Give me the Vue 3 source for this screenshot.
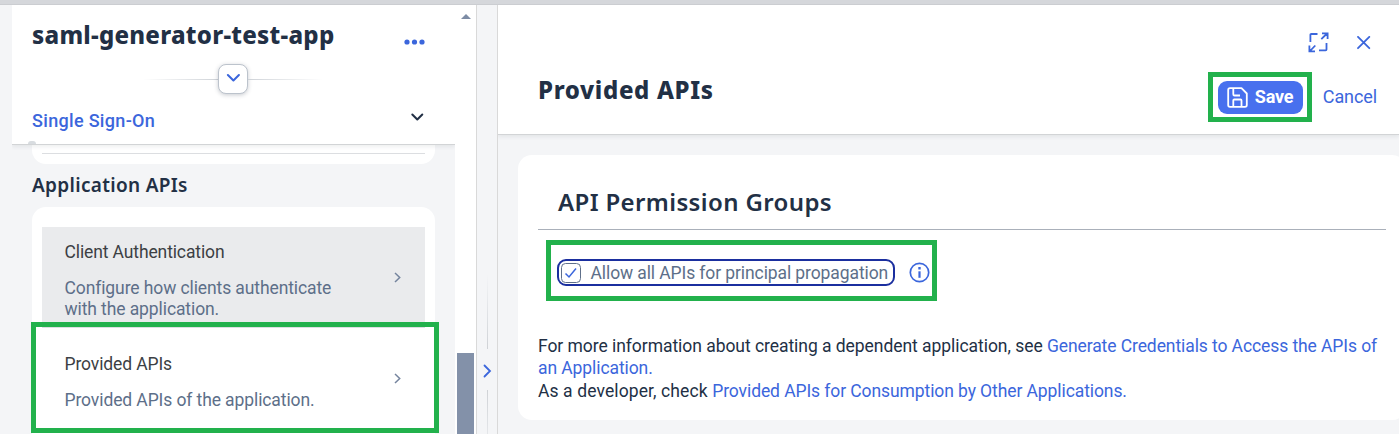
<script setup>
const items = [
  { title: 'Client Authentication', text: 'Configure how clients authenticate with the application.', active: true },
  { title: 'Provided APIs', text: 'Provided APIs of the application.', active: false },
]
</script>

<template>
  <div class="page">
    <div class="topbar"></div>
    <div class="shell">
      <aside class="side">
        <header class="side-head">
          <div class="title-row">
            <h1 class="app-name">saml-generator-test-app</h1>
            <svg class="dots" width="22" height="6" viewBox="0 0 22 6" fill="#3b66dc">
              <circle cx="3" cy="3" r="2.6" /><circle cx="10.5" cy="3" r="2.6" /><circle cx="18" cy="3" r="2.6" />
            </svg>
          </div>
          <div class="expander">
            <i class="fade left"></i>
            <button class="expand-btn">
              <svg width="14" height="10" viewBox="0 0 14 10" fill="none" stroke="#3b66dc" stroke-width="2" stroke-linecap="round" stroke-linejoin="round"><path d="M1.900 2 7.400 7.500l5.500-5.500" /></svg>
            </button>
            <i class="fade right"></i>
          </div>
          <div class="tab-row">
            <span class="tab">Single Sign-On</span>
            <svg class="tab-arrow" width="14" height="10" viewBox="0 0 14 10" fill="none" stroke="#223045" stroke-width="2" stroke-linecap="round" stroke-linejoin="round"><path d="M2.300 2.500l5 5 5-5" /></svg>
          </div>
          <i class="tab-mark"></i>
        </header>
        <div class="side-body">
          <div class="card-end"><i></i></div>
          <h2 class="group-title">Application APIs</h2>
          <div class="list">
            <div v-for="item in items" :key="item.title" class="item" :class="{ active: item.active }">
              <div class="item-title">{{ item.title }}</div>
              <div class="item-line">
                <p class="item-text">{{ item.text }}</p>
              </div>
              <svg class="chev" width="8" height="11" viewBox="0 0 8 11" fill="none" stroke="#75849e" stroke-width="1.500"><path d="M1 1 5.700 5.500 1 10" /></svg>
            </div>
          </div>
        </div>
      </aside>
      <div class="scroll">
        <i class="arrow-up"></i>
        <i class="thumb"></i>
      </div>
      <div class="splitter">
        <i class="grip up"></i>
        <svg width="9" height="14" viewBox="0 0 9 14" fill="none" stroke="#3b66dc" stroke-width="1.800" stroke-linecap="round"><path d="M1.500 1.500 7 7l-5.500 5.500" /></svg>
        <i class="grip down"></i>
      </div>
      <main class="main">
        <header class="main-head">
          <div class="window-tools">
            <svg width="21" height="21" viewBox="0 0 21 21" fill="none" stroke="#3b66dc" stroke-width="1.800">
              <path d="M2.400 10V2.900Q2.400 2 3.300 2H9.500M11 18.400H17.600Q18.500 18.400 18.500 17.500V11M13.300 7.200 19 1.500M14 1.400H19.600V7M7.300 13.500 2 19M1.400 13.500V19.300H7" />
            </svg>
            <svg width="14" height="14" viewBox="0 0 14 14" fill="none" stroke="#3b66dc" stroke-width="1.800" stroke-linecap="round"><path d="M1 .9 12.300 12.200M12.300 .9 1 12.200" /></svg>
          </div>
          <div class="head-row">
            <h1 class="page-title">Provided APIs</h1>
            <div class="actions">
              <button class="save">
                <svg width="21" height="21" viewBox="0 0 21 21" fill="none" stroke="#fff" stroke-width="1.800" stroke-linejoin="round">
                  <path d="M3 1.200H14.500L19.800 6.500V18Q19.800 19.800 18 19.800H3Q1.200 19.800 1.200 18V3Q1.200 1.200 3 1.200ZM6.300 1.500V7.200Q6.300 8.500 7.500 8.500H13M6.300 19.500V13.500Q6.300 12.500 7.300 12.500H13.500Q14.500 12.500 14.500 13.500V19.500" />
                </svg>
                <span>Save</span>
              </button>
              <span class="cancel">Cancel</span>
            </div>
          </div>
        </header>
        <section class="panel">
          <h2 class="section-title"><span>API Permission Groups</span></h2>
          <div class="option">
            <label class="check">
              <svg width="20" height="20" viewBox="0 0 20 20" fill="none"><rect x=".5" y=".5" width="19" height="19" rx="4" stroke="#5f708a" /><path d="M4.500 10.500 8 14l7-8.500" stroke="#3b66dc" stroke-width="1.500" /></svg>
              <span>Allow all APIs for principal propagation</span>
            </label>
            <svg class="info" width="21" height="21" viewBox="0 0 21 21" fill="none" stroke="#3b66dc"><circle cx="10.500" cy="10.500" r="9.200" stroke-width="1.700" /><path d="M10.500 9.300v6.500" stroke-width="2.200" /><path d="M10.500 5v2.500" stroke-width="2.400" /></svg>
          </div>
          <p class="more"><span class="l1">For more information about creating a dependent application, see <a>Generate Credentials to Access the APIs of</a></span><br><a>an Application.</a></p>
          <p class="more last"><span class="l3">As a developer, check <a>Provided APIs for Consumption by Other Applications.</a></span></p>
        </section>
      </main>
    </div>
    <i class="mark mark-item"></i>
    <i class="mark mark-save"></i>
    <i class="mark mark-check"></i>
  </div>
</template>

<style>
html, body { margin: 0; overflow: hidden; }
</style>

<style scoped>
* { box-sizing: border-box; }
h1, h2, p { margin: 0; }
svg { display: block; flex: none; }
button { padding: 0; border: 0; font: inherit; }
.page { position: relative; width: 1399px; height: 434px; overflow: hidden; background: #f4f5f7; font-family: Roboto, "Liberation Sans", sans-serif; font-size: 17.500px; color: #223045; white-space: nowrap; }
.topbar { height: 5px; background: #d5d7db; border-bottom: 1px solid #cbcdd1; }
.shell { display: flex; height: 429px; }
.side { width: 443px; margin-left: 12px; flex: none; display: flex; flex-direction: column; }
.side-head { position: relative; z-index: 1; height: 140px; flex: none; background: #fff; border-bottom: 1px solid #d2d4d6; box-shadow: 0 2px 4px rgba(34, 48, 69, .08); clip-path: inset(0 0 -8px 0); padding: 0 20px; }
.title-row { display: flex; justify-content: space-between; height: 58px; padding-top: 13px; }
.app-name { font: 800 24px/34px "Noto Sans", sans-serif; letter-spacing: .260px; }
.dots { margin: 21px 9px 0 0; }
.expander { display: flex; align-items: center; height: 31px; margin-left: 111px; }
.fade { width: 75px; height: 1px; margin-top: 1px; }
.fade.left { background: linear-gradient(90deg, transparent, #cfd3d8); }
.fade.right { background: linear-gradient(90deg, #cfd3d8, transparent); }
.expand-btn { width: 30px; height: 30px; border: 1px solid #bcc3cc; border-radius: 8px; background: #fff; display: flex; align-items: center; justify-content: center; padding-bottom: 1px; box-shadow: 0 1px 4px rgba(34, 48, 69, .25); }
.tab-row { display: flex; justify-content: space-between; padding-top: 15px; }
.tab { color: #3b66dc; font-size: 18px; line-height: 24px; font-weight: 500; letter-spacing: .320px; }
.tab-arrow { margin: 3px 11px 0 0; }
.tab-mark { position: absolute; left: 16px; bottom: 0; width: 8px; height: 3px; border-radius: 3px 3px 0 0; background: #d8dce0; }
.side-body { padding: 0 20px; }
.card-end { height: 19px; background: #fff; border-radius: 0 0 14px 14px; padding: 8px 10px 0; }
.card-end i { display: block; height: 1px; background: #dcdee1; }
.group-title { height: 43px; padding-top: 9px; font: 600 19px/24px "Noto Sans", sans-serif; letter-spacing: .320px; }
.list { height: 300px; background: #fff; border-radius: 14px 14px 0 0; padding: 20px 10px 0; }
.item { position: relative; height: 101px; padding: 14px 23px 0 22.500px; border-bottom: 1px solid #fff; display: grid; grid-template-columns: 280px 8px; grid-template-rows: 22px auto; column-gap: 49px; letter-spacing: -.100px; }
.item.active { background: #eaebed; border-color: #dcdee1; }
.item + .item { padding-top: 25px; }
.item-title { line-height: 22px; color: #3c3f44; letter-spacing: -.120px; }
.item-line { grid-row: 2; padding-top: 15px; }
.item-text { line-height: 21px; color: #5d6f89; white-space: normal; width: 275px; }
.chev { grid-row: 1 / 3; grid-column: 2; margin-top: 31px; }
.item + .item .chev { margin-top: 20px; }
.scroll { width: 21px; flex: none; background: #fff; display: flex; flex-direction: column; align-items: center; justify-content: space-between; padding-top: 9px; }
.arrow-up { border: 5px solid transparent; border-top: 0; border-bottom-color: #7d8ca5; }
.thumb { width: 17px; height: 81px; margin-right: 1px; background: #8391a9; }
.splitter { width: 22px; flex: none; border: solid #d9d9d9; border-width: 0 1px; display: flex; flex-direction: column; align-items: center; padding-top: 269px; overflow: hidden; }
.grip { width: 1px; height: 75px; flex: none; }
.grip.up { background: linear-gradient(transparent, #cfd2d6); }
.grip.down { margin-top: 12px; background: linear-gradient(#cfd2d6, transparent); }
.splitter svg { margin: 15px 0 0 1px; }
.main { flex: 1; min-width: 0; overflow: hidden; }
.main-head { height: 130px; background: #fff; border-bottom: 1px solid #d2d4d6; box-shadow: 0 2px 4px rgba(34, 48, 69, .08); padding: 27px 22px 0 40px; }
.window-tools { display: flex; justify-content: flex-end; align-items: center; gap: 28px; height: 21px; padding-right: 6px; }
.head-row { display: flex; justify-content: space-between; padding-top: 20px; }
.page-title { font: 800 24px/34px "Noto Sans", sans-serif; letter-spacing: .640px; }
.actions { display: flex; align-items: center; gap: 20px; padding-top: 8px; height: 41px; }
.save { width: 85px; height: 33px; border-radius: 9px; background: #4870ee; color: #fff; display: flex; align-items: center; gap: 7px; padding-left: 9px; font-size: 18px; font-weight: 700; letter-spacing: -.200px; }
.save span, .cancel { margin-bottom: 2px; }
.cancel { color: #3b66dc; font-size: 18px; letter-spacing: -.100px; }
.panel { width: 888px; height: 265px; margin: 20px 0 0 20px; background: #fff; border-radius: 14px; padding: 30px 20px 0; }
.section-title { height: 45px; border-bottom: 1px solid #aab0ba; padding-left: 20px; font: 600 24px/34px "Noto Sans", sans-serif; letter-spacing: .370px; }
.option { display: flex; align-items: center; gap: 14px; height: 27px; margin: 29px 0 0 19px; }
.check { display: flex; align-items: center; width: 338px; height: 27px; border: 2px solid #1b2f9f; border-radius: 9px; gap: 9.500px; padding-left: 2px; color: #5d6f89; letter-spacing: -.100px; }
.more { margin-top: 49px; line-height: 22px; letter-spacing: -.100px; }
.more.last { margin-top: 1px; }
.more a { color: #3b66dc; letter-spacing: -.090px; }
.l1 { letter-spacing: -.050px; }
.l3 { letter-spacing: .110px; }
.mark { position: absolute; border: 5px solid #22b14c; }
.mark-item { left: 31px; top: 322px; width: 408px; height: 111px; }
.mark-save { left: 1208px; top: 72px; width: 104px; height: 50px; }
.mark-check { left: 546px; top: 240px; width: 391px; height: 61px; }
</style>
